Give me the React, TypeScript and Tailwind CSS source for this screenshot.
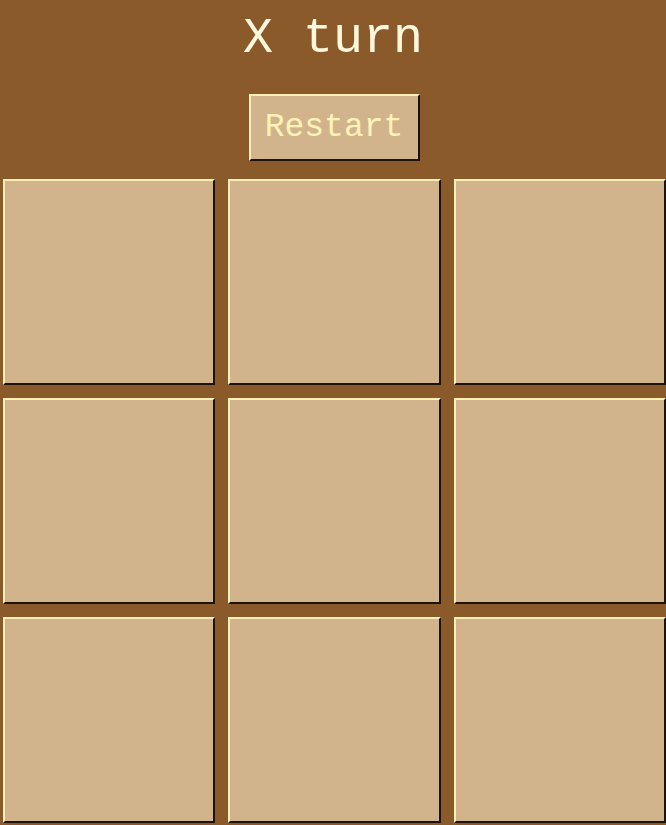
import { useState } from 'react';

type Cell = 'X' | 'O' | null;

const mono = "font-['Liberation_Mono','Courier_New',monospace]";

export default function App() {
    const [cells, setCells] = useState<Cell[]>(Array(9).fill(null));
    const [turn, setTurn] = useState<'X' | 'O'>('X');

    const play = (i: number) => {
        if (cells[i]) return;
        const next = [...cells];
        next[i] = turn;
        setCells(next);
        setTurn(turn === 'X' ? 'O' : 'X');
    };

    const restart = () => {
        setCells(Array(9).fill(null));
        setTurn('X');
    };

    return (
        <div className={`min-h-screen bg-[#8B5A2B] flex flex-col items-center ${mono}`}>
            <h1 className="mt-[11px] text-[50px] leading-[56px] text-[#FFF8DC]">{turn} turn</h1>

            <button
                onClick={restart}
                className="mt-[27px] ml-[2px] h-[67px] w-[171px] bg-[#D2B48C] text-[33px] leading-[36px] text-[#FFF3B8] border-2 border-t-[#FFF0B5] border-l-[#FFF0B5] border-b-[#1c140c] border-r-[#1c140c]"
            >
                Restart
            </button>

            <div className="mt-[18px] w-full grid grid-cols-3 gap-[13px] pl-[3px]">
                {cells.map((c, i) => (
                    <button
                        key={i}
                        onClick={() => play(i)}
                        className="h-[206px] bg-[#D2B48C] text-[96px] text-[#5a3a1a] border-2 border-t-[#FFF0B5] border-l-[#FFF0B5] border-b-[#1c140c] border-r-[#1c140c]"
                    >
                        {c}
                    </button>
                ))}
            </div>
        </div>
    );
}
